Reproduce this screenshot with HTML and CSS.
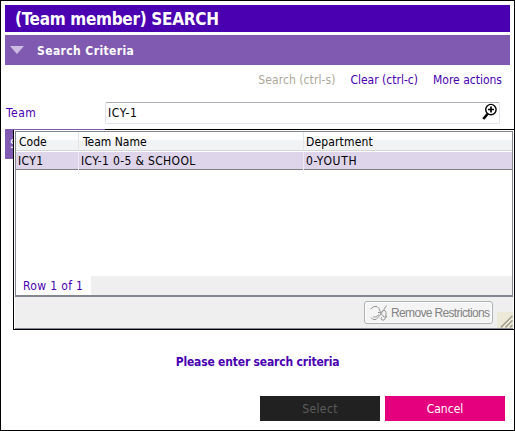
FILE: index.html
```html
<!DOCTYPE html>
<html lang="en">
<head>
    <meta charset="UTF-8">
    <meta name="viewport" content="width=device-width, initial-scale=1.0">
    <title>(Team member) SEARCH</title>
    <link rel="stylesheet" href="styles.css">
</head>
<body>
    <div class="window">
        <h1 class="title">(Team member) SEARCH</h1>
        <div class="section-bar">
            <span class="arrow"></span>
            <span class="section-name">Search Criteria</span>
        </div>
        <div class="actions">
            <span class="action disabled">Search (ctrl-s)</span>
            <span class="action clear">Clear (ctrl-c)</span>
            <span class="action more">More actions</span>
        </div>
        <div class="field">
            <label for="team">Team</label>
            <div class="lookup">
                <input type="text" id="team" value="ICY-1">
                <svg class="magnifier" width="16" height="18" viewBox="0 0 16 18">
                    <path d="M5.500 11L1.300 16" stroke="#000" stroke-width="2.600" fill="none"/>
                    <circle cx="8.900" cy="6.600" r="5.200" fill="#fff" stroke="#000" stroke-width="1.400"/>
                    <path d="M6 6.500h6M9 3.500v6" stroke="#000" stroke-width="1.700"/>
                </svg>
            </div>
        </div>
        <div class="results">
            <div class="result-bar"><span>S</span></div>
            <div class="popup">
                <div class="grid-panel">
                    <div class="grid-row grid-head">
                        <span>Code</span>
                        <span>Team Name</span>
                        <span>Department</span>
                    </div>
                    <div class="grid-row selected">
                        <span>ICY1</span>
                        <span class="team-name">ICY-1 0-5 &amp; SCHOOL</span>
                        <span class="dept">0-YOUTH</span>
                    </div>
                    <div class="grid-empty"></div>
                    <div class="grid-status"><span>Row 1 of 1</span></div>
                </div>
                <div class="popup-footer">
                    <button class="remove" disabled>
                        <svg width="18" height="16" viewBox="0 0 18 16" fill="none" stroke="#969696" stroke-width="1">
                            <path d="M.5 4L4 1.500h3L9 3.500l2 5 3 3.500h2l.5-1M1 12.500l2 2h3L9 11.500l5-7L16.500.5M3 12h3l3-2.500M8 7.500h3l2-2h2l1 2v5l-2 2.500h-2l-1-1.500 1-1.500"/>
                        </svg>
                        <span>Remove Restrictions</span>
                    </button>
                    <svg class="grip" width="16" height="16" viewBox="0 0 16 16">
                        <path d="M4 15.500L15.500 4M8.500 15.500l7-7M13 15.500l2.500-2.500" stroke="#a7a38f" stroke-width="1.800"/>
                        <path d="M5.700 15.500l9.800-9.800M10.200 15.500l5.300-5.300" stroke="#fff" stroke-width=".8"/>
                    </svg>
                </div>
            </div>
        </div>
        <p class="message">Please enter search criteria</p>
        <div class="buttons">
            <button class="btn select" disabled>Select</button>
            <button class="btn cancel">Cancel</button>
        </div>
    </div>
</body>
</html>
```

FILE: styles.css
```css
* {
    box-sizing: border-box;
}
body {
    margin: 0;
    background-color: #fff;
    font-family: Tahoma, "DejaVu Sans Condensed", "DejaVu Sans", sans-serif;
    font-stretch: condensed;
    font-size: 12px;
    color: #000;
}
button, input {
    font-family: inherit;
    font-stretch: inherit;
    font-size: inherit;
}
.window {
    display: flex;
    flex-direction: column;
    width: 515px;
    height: 431px;
    padding: 4px;
    border: 1px solid #000;
    overflow: hidden;
}
.title {
    width: 505px;
    height: 27px;
    margin: 0 0 3px;
    padding-left: 10px;
    background-color: #4a00b0;
    color: #fff;
    font-size: 17px;
    line-height: 28px;
    letter-spacing: -0.3px;
}
.section-bar {
    display: flex;
    align-items: center;
    gap: 13px;
    width: 505px;
    height: 30px;
    padding-left: 5px;
    background-color: #7f5ab0;
    color: #fff;
    font-weight: bold;
}
.section-name {
    padding-top: 2px;
    letter-spacing: 0.4px;
}
.arrow {
    border: 7px solid transparent;
    border-top: 8px solid #cdbce2;
    border-bottom: 0;
}
.actions {
    display: flex;
    justify-content: flex-end;
    gap: 15px;
    height: 37px;
    padding-right: 8px;
    line-height: 31px;
    color: #4a00b0;
}
.action {
    white-space: nowrap;
}
.disabled {
    color: #aca899;
    letter-spacing: 0.07px;
}
.field {
    display: flex;
    height: 22px;
    color: #4a00b0;
    line-height: 22px;
}
.field label {
    width: 100px;
    padding-left: 1px;
    letter-spacing: 0.5px;
}
.lookup {
    display: flex;
    width: 395px;
    border: 1px solid #e2e3ea;
    border-top-color: #abadb3;
    border-radius: 2px;
}
.lookup input {
    flex: 1;
    padding: 0 2px;
    border: 0;
    outline: 0;
    background: none;
    letter-spacing: 0.6px;
}
.magnifier {
    margin: 0 1px 0 0;
}
.results {
    position: relative;
    height: 201px;
    margin-top: 5px;
}
.result-bar {
    width: 100px;
    height: 30px;
    padding-left: 5px;
    background-color: #7f5ab0;
    color: #fff;
    line-height: 30px;
}
.popup {
    position: absolute;
    top: 0;
    left: 8px;
    width: 502px;
    height: 201px;
    padding: 1px;
    border: 1px solid #000;
    background-color: #fff;
}
/* the result bar shows through above the left end of the list */
.popup::before {
    content: "";
    position: absolute;
    top: -1px;
    left: -1px;
    width: 92px;
    height: 1px;
    background-color: #7f5ab0;
}
.grid-panel {
    display: flex;
    flex-direction: column;
    height: 166px;
    border: 1px solid #828790;
    border-bottom-width: 2px;
}
.grid-row {
    display: grid;
    grid-template-columns: 63px 225px 1fr;
}
.grid-row span {
    white-space: nowrap;
}
.grid-head {
    height: 19px;
    line-height: 21px;
    background: linear-gradient(#fff 40%, #f1f2f4 50%, #f1f3f4);
    border-bottom: 1px solid #d5d5d5;
}
.grid-head span {
    padding-left: 3px;
    border-right: 1px solid #e3e4e6;
}
.grid-head span + span {
    padding-left: 4px;
}
.grid-head span:last-child {
    padding-left: 2px;
    border-right: 0;
    letter-spacing: 0.15px;
}
.selected {
    height: 19px;
    border-top: 1px solid #fff;
    border-bottom: 1px solid #808080;
    background-color: #ded5eb;
    line-height: 19px;
}
.selected span {
    padding-left: 2px;
    border-right: 1px solid #eee9f4;
    letter-spacing: 0.35px;
}
.selected span:last-child {
    border-right: 0;
}
.selected .dept {
    letter-spacing: 0.7px;
}
.grid-empty {
    flex: 1;
}
.grid-status {
    height: 19px;
    background-color: #efefef;
    color: #4a00b0;
    line-height: 20px;
}
.grid-status span {
    display: block;
    width: 75px;
    height: 19px;
    padding-left: 7px;
    background-color: #fff;
    letter-spacing: 0.35px;
}
.popup-footer {
    display: flex;
    justify-content: flex-end;
    gap: 4px;
    height: 31px;
    margin-bottom: 1px;
    padding-top: 4px;
    background-color: #efefef;
    box-shadow: 0 1px #828790;
}
.remove {
    display: flex;
    align-items: center;
    gap: 3px;
    width: 129px;
    height: 23px;
    padding: 0 0 0 5px;
    border: 1px solid #adb2b5;
    border-radius: 3px;
    background-color: #f4f4f4;
    box-shadow: inset 0 0 0 1px #fcfcfc;
    color: #838383;
    font-family: "Liberation Sans", Arial, sans-serif;
    letter-spacing: -0.65px;
    white-space: nowrap;
}
.remove svg {
    flex: none;
}
.grip {
    margin-top: 11px;
    background-color: #ece9d8;
}
.message {
    width: 505px;
    margin: 24px 0 26px;
    color: #4a00b0;
    font-weight: bold;
    letter-spacing: -0.18px;
    line-height: 16px;
    text-align: center;
}
.buttons {
    display: flex;
    justify-content: flex-end;
    gap: 5px;
    padding-right: 5px;
}
.btn {
    flex: none;
    width: 120px;
    height: 25px;
    padding: 0;
    border: 0;
    color: #fff;
}
.select {
    background-color: #212121;
    color: #5c5c5c;
    letter-spacing: 0.4px;
}
.cancel {
    background-color: #e5007d;
}
```
